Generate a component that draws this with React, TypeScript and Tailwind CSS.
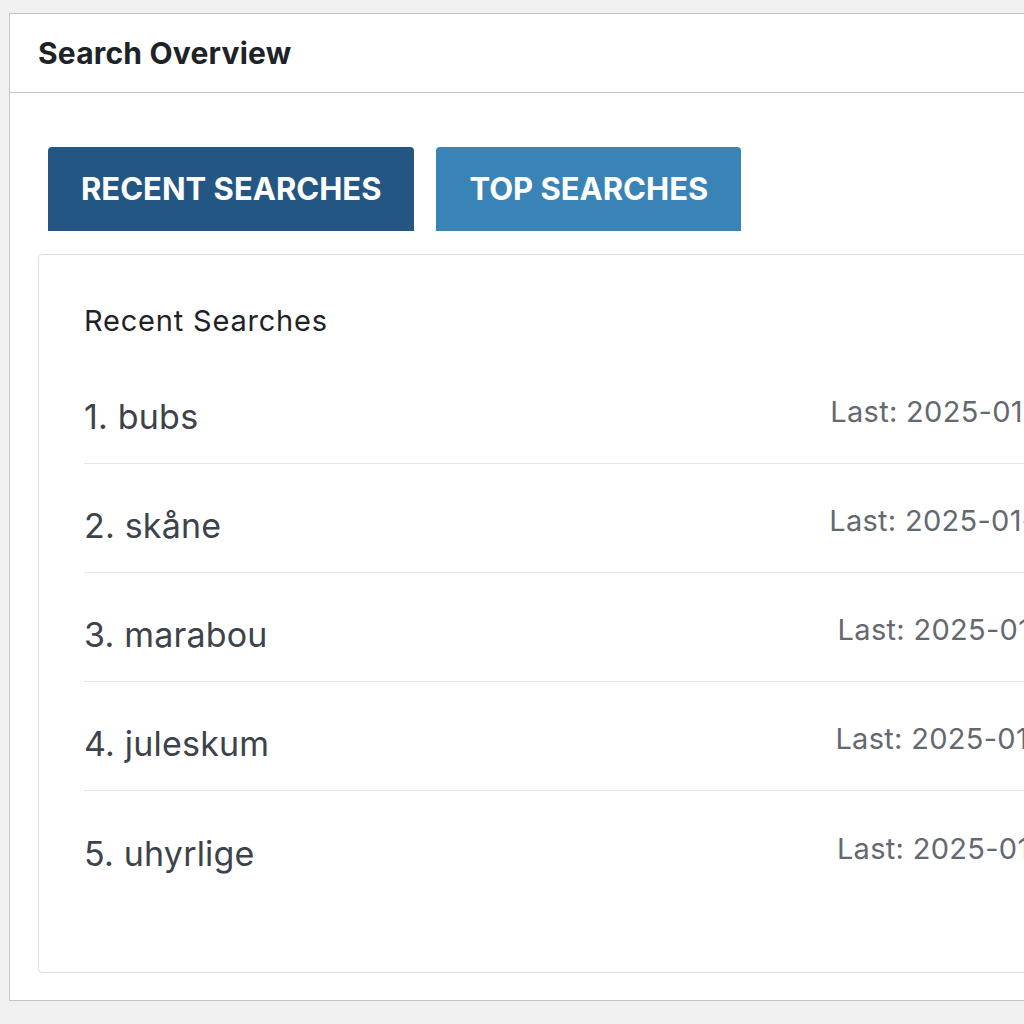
import React from 'react'

const searches = [
  { term: 'bubs', last: '2025-01-15 14:32' },
  { term: 'skåne', last: '2025-01-15 14:48' },
  { term: 'marabou', last: '2025-01-14 21:17' },
  { term: 'juleskum', last: '2025-01-14 19:10' },
  { term: 'uhyrlige', last: '2025-01-13 16:15' },
]

export default function App() {
  return (
    <div
      className="w-[1024px] h-[1024px] overflow-hidden bg-[#f0f0f1] pt-[13px] pl-[9px]"
      style={{ fontFamily: 'Inter, "Noto Sans", sans-serif' }}
    >
      <div className="w-[1212px] bg-white border border-[#c3c4c7]">
        {/* Header */}
        <div className="h-[79px] flex items-center px-[28px] border-b border-[#c3c4c7]">
          <h2 className="text-[30px] font-bold text-[#1d2327] tracking-[0.2px]">Search Overview</h2>
        </div>

        <div className="px-[28px] pt-[54px] pb-[27px]">
          {/* Tabs */}
          <div className="flex gap-[22px] ml-[10px]">
            <button className="h-[84px] px-[33px] rounded-t-[4px] bg-[#245684] text-white text-[31px] font-bold uppercase">
              Recent Searches
            </button>
            <button className="h-[84px] px-[33px] rounded-t-[4px] bg-[#3a83b6] text-white text-[31px] font-bold uppercase">
              Top Searches
            </button>
          </div>

          {/* Panel */}
          <div className="mt-[23px] border border-[#dcdcde] rounded-[4px] pl-[45px] pr-[40px] pt-[49px] pb-[72px]">
            <h3 className="text-[29px] leading-[34px] text-[#1d2327] tracking-[0.8px] mb-[17px]">Recent Searches</h3>
            <ul>
              {searches.map((s, i) => (
                <li
                  key={s.term}
                  className={`flex items-center justify-between h-[109px] pt-[16px] ${
                    i < searches.length - 1 ? 'border-b border-[#e6e6e8]' : ''
                  }`}
                >
                  <span className="text-[34px] leading-[40px] text-[#3c434a] tracking-[0.2px]">
                    {i + 1}. {s.term}
                  </span>
                  <span className="text-[29px] leading-[40px] text-[#646970] tracking-[0.3px] -mt-[10px]">
                    Last: {s.last}
                  </span>
                </li>
              ))}
            </ul>
          </div>
        </div>
      </div>
    </div>
  )
}
